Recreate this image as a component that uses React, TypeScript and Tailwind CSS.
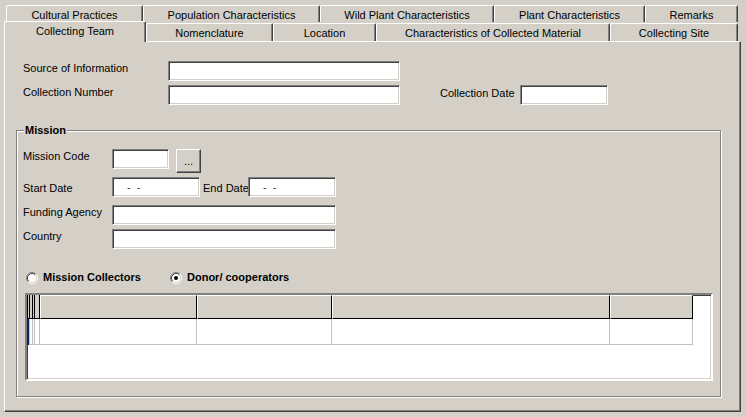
import React from 'react';

const raised =
  'border border-t-white border-l-white border-r-[#404040] border-b-[#404040] shadow-[inset_-1px_-1px_0_#808080] bg-[#d4d0c8]';
const sunken =
  'bg-white border border-t-[#808080] border-l-[#808080] border-r-white border-b-white shadow-[inset_1px_1px_0_#404040,inset_-1px_-1px_0_#d4d0c8]';

function BackTab({ label, w }: { label: string; w: string }) {
  return (
    <div
      className={`${w} h-[17px] flex justify-center pt-[3px] border-t border-l border-r border-t-white border-l-white border-r-[#404040] rounded-t-[2px] shadow-[inset_-1px_0_0_#808080] leading-[13px] whitespace-nowrap`}
    >
      {label}
    </div>
  );
}

function FrontTab({ label, w, active }: { label: string; w: string; active?: boolean }) {
  if (active) {
    return (
      <div
        className={`${w} h-[21px] -mb-[1px] relative z-10 bg-[#d4d0c8] flex justify-center pt-[3px] border-t border-l border-r border-t-white border-l-white border-r-[#404040] rounded-t-[2px] shadow-[inset_-1px_0_0_#808080] leading-[13px] whitespace-nowrap`}
      >
        {label}
      </div>
    );
  }
  return (
    <div
      className={`${w} h-[18px] flex justify-center pt-[3px] border-t border-l border-r border-t-white border-l-white border-r-[#404040] rounded-t-[2px] shadow-[inset_-1px_0_0_#808080] leading-[13px] whitespace-nowrap`}
    >
      {label}
    </div>
  );
}

function Radio({ checked }: { checked?: boolean }) {
  return (
    <svg width="12" height="12" viewBox="0 0 12 12" className="shrink-0">
      <circle cx="6" cy="6" r="5" fill="#fff" />
      <path d="M2.11 9.89 A5.5 5.5 0 0 1 9.89 2.11" stroke="#808080" fill="none" />
      <path d="M9.89 2.11 A5.5 5.5 0 0 1 2.11 9.89" stroke="#fff" fill="none" />
      <path d="M2.82 9.18 A4.5 4.5 0 0 1 9.18 2.82" stroke="#404040" fill="none" />
      <path d="M9.18 2.82 A4.5 4.5 0 0 1 2.82 9.18" stroke="#d4d0c8" fill="none" />
      {checked && <circle cx="6" cy="6" r="2" fill="#000" />}
    </svg>
  );
}

function DateBox() {
  return (
    <div className={`${sunken} w-[88px] h-[20px] flex items-center pl-[14px] text-[#404040] whitespace-pre leading-none`}>
      {'-  -'}
    </div>
  );
}

export default function App() {
  return (
    <div className="w-[746px] h-[417px] bg-[#d4d0c8] text-black text-[11px] font-['Liberation_Sans',Arial,sans-serif] overflow-hidden">
      {/* tab strip, back row */}
      <div className="flex ml-[6px] mt-[5px]">
        <BackTab label="Cultural Practices" w="w-[137px]" />
        <BackTab label="Population Characteristics" w="w-[177px]" />
        <BackTab label="Wild Plant Characteristics" w="w-[174px]" />
        <BackTab label="Plant Characteristics" w="w-[151px]" />
        <BackTab label="Remarks" w="w-[93px]" />
      </div>
      {/* tab strip, front row */}
      <div className="flex items-end ml-[4px] -mt-[1px] h-[20px]">
        <FrontTab label="Collecting Team" w="w-[142px]" active />
        <FrontTab label="Nomenclature" w="w-[127px]" />
        <FrontTab label="Location" w="w-[103px]" />
        <FrontTab label="Characteristics of Collected Material" w="w-[234px]" />
        <FrontTab label="Collecting Site" w="w-[128px]" />
      </div>

      {/* panel */}
      <div className="ml-[4px] w-[737px] h-[371px] border border-t-white border-l-white border-r-[#404040] border-b-[#404040] shadow-[inset_-1px_-1px_0_#808080] pt-[19px]">
        <div className="pl-[18px] leading-[13px] whitespace-nowrap">
          <div className="flex items-start">
            <div className="w-[145px] pt-[1px]">Source of Information</div>
            <div className={`${sunken} w-[232px] h-[20px]`} />
          </div>
          <div className="flex items-start mt-[4px]">
            <div className="w-[145px] pt-[1px]">Collection Number</div>
            <div className={`${sunken} w-[232px] h-[20px]`} />
            <div className="ml-[40px] w-[80px] pt-[2px]">Collection Date</div>
            <div className={`${sunken} w-[88px] h-[20px]`} />
          </div>
        </div>

        {/* Mission group */}
        <div className="relative ml-[11px] mt-[25px] w-[705px] h-[267px] border border-[#808080] shadow-[inset_1px_1px_0_#fff,1px_1px_0_#fff] pt-[18px] leading-[13px] whitespace-nowrap">
          <span className="absolute left-[7px] -top-[7px] px-[1px] bg-[#d4d0c8] font-bold">Mission</span>
          <div className="pl-[6px]">
            <div className="flex items-start">
              <div className="w-[89px] pt-[1px]">Mission Code</div>
              <div className={`${sunken} w-[57px] h-[20px]`} />
              <div className={`${raised} ml-[7px] w-[25px] h-[24px] flex justify-center pt-[5px] leading-[13px]`}>...</div>
            </div>
            <div className="flex items-start mt-[4px]">
              <div className="w-[89px] pt-[5px]">Start Date</div>
              <DateBox />
              <div className="ml-[3px] w-[45px] pt-[5px]">End Date</div>
              <DateBox />
            </div>
            <div className="flex items-start mt-[8px]">
              <div className="w-[89px] pt-[1px]">Funding Agency</div>
              <div className={`${sunken} w-[224px] h-[20px]`} />
            </div>
            <div className="flex items-start mt-[4px]">
              <div className="w-[89px] pt-[1px]">Country</div>
              <div className={`${sunken} w-[224px] h-[20px]`} />
            </div>

            <div className="flex items-center mt-[22px] h-[13px] font-bold">
              <div className="flex items-center ml-[3px] w-[144px] gap-[5px]">
                <Radio />
                <span>Mission Collectors</span>
              </div>
              <div className="flex items-center gap-[5px]">
                <Radio checked />
                <span>Donor/ cooperators</span>
              </div>
            </div>

            {/* grid */}
            <div className="ml-[2px] mt-[9px] w-[688px] h-[88px] bg-white border-2 border-t-[#808080] border-l-[#808080] border-r-white border-b-white shadow-[inset_1px_1px_0_#404040,inset_-1px_-1px_0_#d4d0c8]">
              <div className="flex h-[24px]">
                <div className="w-[1px] bg-black" />
                <div className="w-[2px] bg-[#d4d0c8] border-r border-black border-b" />
                <div className="w-[3px] bg-[#d4d0c8] border-r border-black border-b" />
                <div className="w-[2px] bg-[#d4d0c8] border-r border-black border-b" />
                <div className="w-[5px] bg-[#d4d0c8] border-r border-black border-b" />
                <div className="w-[157px] bg-[#d4d0c8] border border-t-white border-l-white border-r-black border-b-black" />
                <div className="w-[135px] bg-[#d4d0c8] border border-t-white border-l-white border-r-black border-b-black" />
                <div className="w-[278px] bg-[#d4d0c8] border border-t-white border-l-white border-r-black border-b-black" />
                <div className="w-[83px] bg-[#d4d0c8] border border-t-white border-l-white border-r-black border-b-black" />
              </div>
              <div className="flex h-[26px]">
                <div className="w-[2px] bg-[#0a246a]" />
                <div className="w-[1px] border-r border-b border-[#c0c0c0]" />
                <div className="w-[3px] border-r border-b border-[#c0c0c0]" />
                <div className="w-[2px] border-r border-b border-[#c0c0c0]" />
                <div className="w-[5px] border-r border-b border-[#c0c0c0]" />
                <div className="w-[157px] border-r border-b border-[#c0c0c0]" />
                <div className="w-[135px] border-r border-b border-[#c0c0c0]" />
                <div className="w-[278px] border-r border-b border-[#c0c0c0]" />
                <div className="w-[83px] border-r border-b border-[#c0c0c0]" />
              </div>
            </div>
          </div>
        </div>
      </div>
    </div>
  );
}
